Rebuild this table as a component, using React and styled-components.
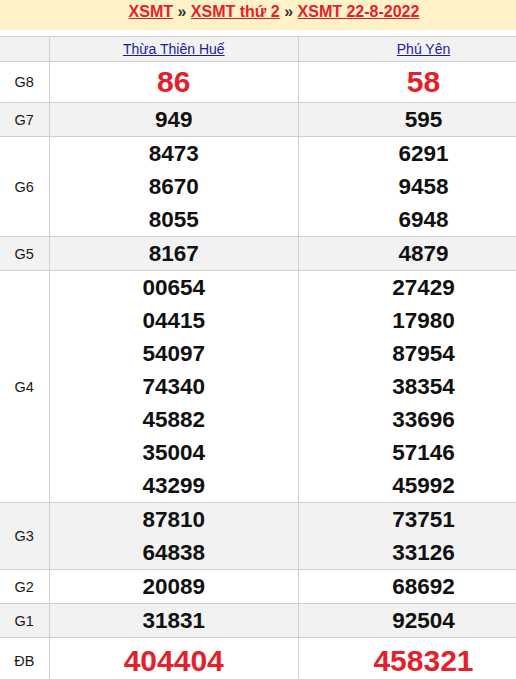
import React from "react"
import styled, { createGlobalStyle } from "styled-components"

const GlobalStyle = createGlobalStyle`
  html, body {
    margin: 0;
    padding: 0;
    overflow-x: hidden;
    background: #fff;
    font-family: "Liberation Sans", Arial, sans-serif;
  }
`

const Page = styled.div`
  width: 548px;
`

const Crumbs = styled.div`
  background: #fff2c9;
  text-align: center;
  font-size: 16px;
  font-weight: bold;
  line-height: 18px;
  padding: 3px 0 9px;
  color: #333;
  margin-bottom: 6px;
  a {
    color: #e4212b;
    text-decoration: underline;
  }
`

const Table = styled.table`
  width: 548px;
  border-collapse: collapse;
  table-layout: fixed;
  td,
  th {
    border: 1px solid #cfcfcf;
    padding: 0;
    text-align: center;
  }
  td:first-child,
  th:first-child {
    border-left: none;
  }
  td:last-child,
  th:last-child {
    border-right: none;
  }
`

const HeadRow = styled.tr`
  background: #f2f2f2;
  height: 25px;
  th {
    font-weight: normal;
    font-size: 14px;
  }
  a {
    color: #1c1c9c;
    text-decoration: underline;
  }
`

const Row = styled.tr`
  background: ${props => (props.shaded ? "#f2f2f2" : "#fff")};
`

const Label = styled.td`
  font-size: 14.5px;
  color: #1a1a1a;
`

const Num = styled.div`
  font-size: ${props => (props.big ? "30px" : "22.5px")};
  line-height: ${props => (props.big ? props.h : "33px")};
  font-weight: bold;
  color: ${props => (props.big ? "#e4212b" : "#111")};
`

const prizes = [
  { name: "G8", big: true, h: "40px", a: ["86"], b: ["58"] },
  { name: "G7", a: ["949"], b: ["595"] },
  { name: "G6", a: ["8473", "8670", "8055"], b: ["6291", "9458", "6948"] },
  { name: "G5", a: ["8167"], b: ["4879"] },
  {
    name: "G4",
    a: ["00654", "04415", "54097", "74340", "45882", "35004", "43299"],
    b: ["27429", "17980", "87954", "38354", "33696", "57146", "45992"],
  },
  { name: "G3", a: ["87810", "64838"], b: ["73751", "33126"] },
  { name: "G2", a: ["20089"], b: ["68692"] },
  { name: "G1", a: ["31831"], b: ["92504"] },
  { name: "ĐB", big: true, h: "46px", a: ["404404"], b: ["458321"] },
]

const App = () => {
  return (
    <Page>
      <GlobalStyle />
      <Crumbs>
        <a href="#">XSMT</a> » <a href="#">XSMT thứ 2</a> »{" "}
        <a href="#">XSMT 22-8-2022</a>
      </Crumbs>
      <Table>
        <colgroup>
          <col style={{ width: "49px" }} />
          <col />
          <col />
        </colgroup>
        <thead>
          <HeadRow>
            <th></th>
            <th>
              <a href="#">Thừa Thiên Huế</a>
            </th>
            <th>
              <a href="#">Phú Yên</a>
            </th>
          </HeadRow>
        </thead>
        <tbody>
          {prizes.map((p, i) => (
            <Row key={p.name} shaded={i % 2 === 1}>
              <Label>{p.name}</Label>
              <td>
                {p.a.map(n => (
                  <Num key={n} big={p.big} h={p.h}>
                    {n}
                  </Num>
                ))}
              </td>
              <td>
                {p.b.map(n => (
                  <Num key={n} big={p.big} h={p.h}>
                    {n}
                  </Num>
                ))}
              </td>
            </Row>
          ))}
        </tbody>
      </Table>
    </Page>
  )
}

export default App
